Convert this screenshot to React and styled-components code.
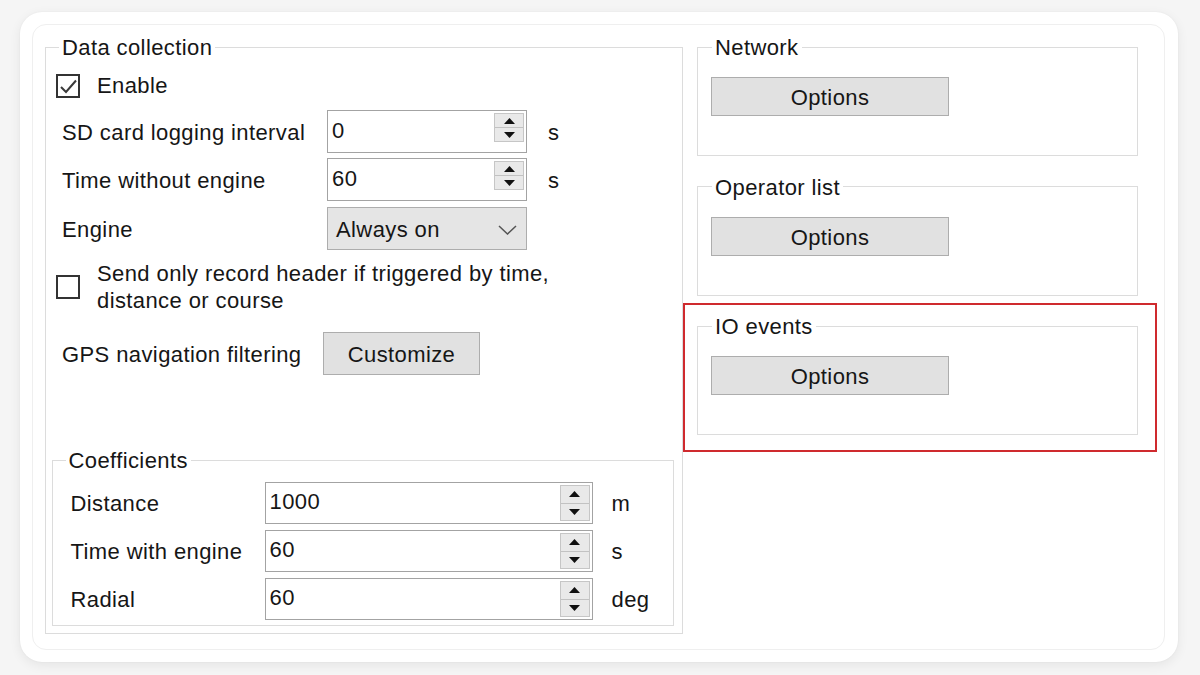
import React from 'react';
import styled, { createGlobalStyle } from 'styled-components';

const Global = createGlobalStyle`
  html, body { margin: 0; padding: 0; background: #f5f5f5; }
  body { font-family: "Liberation Sans", Arial, sans-serif; color: #161616; }
  * { box-sizing: border-box; }
`;

const Page = styled.div`
  width: 1200px;
  height: 675px;
  padding: 12px 22px 13px 20px;
`;

const Card = styled.div`
  height: 100%;
  background: #fff;
  border-radius: 22px;
  box-shadow: 0 3px 12px rgba(0, 0, 0, 0.07), 0 0 2px rgba(0, 0, 0, 0.05);
  padding: 12px 13px 12px 12px;
`;

const Frame = styled.div`
  height: 100%;
  border: 1.5px solid #efefef;
  border-radius: 14px;
  padding: 10px 0 0 11.5px;
  display: flex;
  align-items: flex-start;
  gap: 14px;
`;

const Group = styled.fieldset`
  margin: ${p => p.$margin || '0'};
  padding: 0 0 ${p => p.$padBottom || 0}px 0;
  border: 1.5px solid #dcdcdc;
  min-width: 0;
  width: ${p => p.$width || 'auto'};
  display: flex;
  flex-direction: column;
  align-items: flex-start;
`;

const Legend = styled.legend`
  margin-left: ${p => p.$offset || 13.5}px;
  padding: 1px 3px 0;
  font-size: 22px;
  letter-spacing: 0.4px;
  line-height: 23px;
  height: 24px;
  color: #161616;
`;

const Text = styled.span`
  font-size: 22px;
  letter-spacing: 0.4px;
  line-height: ${p => p.$lh || 24}px;
  color: #161616;
  white-space: nowrap;
`;

const CheckRow = styled.div`
  display: flex;
  align-items: center;
  gap: 17px;
  margin-top: ${p => p.$top}px;
  padding-left: 10.5px;
`;

const Box = styled.span`
  width: 24px;
  height: 24px;
  border: 2px solid #333;
  background: #fff;
  display: flex;
  align-items: center;
  justify-content: center;
  flex: none;
`;

const FieldRow = styled.div`
  display: grid;
  grid-template-columns: ${p => p.$cols};
  align-items: center;
  height: ${p => p.$h || 43}px;
  margin-top: ${p => p.$top}px;
  padding-left: ${p => p.$pad || 16.5}px;
`;

const Label = styled(Text)`
  padding-top: 2px;
`;

const Unit = styled(Text)`
  margin-left: ${p => p.$gap || 21}px;
  padding-top: 2px;
`;

const InputBox = styled.div`
  height: 100%;
  border: 1.5px solid #a3a3a3;
  background: #fff;
  display: flex;
  align-items: stretch;
  padding: 2px 2px 2px 4px;
`;

const Value = styled(Text)`
  flex: 1;
  align-self: center;
  margin-top: -2px;
`;

const Spinner = styled.div`
  width: 30px;
  display: flex;
  flex-direction: column;
  border: 1px solid #c6c6c6;
  background: #e9e9e9;
  margin-bottom: ${p => p.$bottom || 0}px;
`;

const SpinHalf = styled.div`
  flex: 1;
  display: flex;
  align-items: center;
  justify-content: center;
  border-top: ${p => (p.$lower ? '1.5px solid #c2c2c2' : 'none')};
`;

const Select = styled.div`
  height: 100%;
  border: 1.5px solid #adadad;
  background: #e5e5e5;
  display: flex;
  align-items: center;
  justify-content: space-between;
  padding: 2px 9px 0 8px;
`;

const Button = styled.div`
  width: ${p => p.$w}px;
  height: ${p => p.$h || 39}px;
  margin: ${p => p.$margin || '0'};
  border: 1.5px solid #adadad;
  background: #e1e1e1;
  display: flex;
  align-items: center;
  justify-content: center;
  padding-top: 3px;
`;

const RightCol = styled.div`
  width: 441px;
  display: flex;
  flex-direction: column;
  gap: 18.5px;
`;

const Highlight = styled.div`
  border: 2px solid #cf2a2e;
  padding: 9px 17px 15px 12px;
  margin: -11px -19px -17px -14px;
`;

const Arrow = ({ down }) => (
  <svg width="11" height="6" viewBox="0 0 11 6">
    <polygon points={down ? '0,0 11,0 5.5,6' : '0,6 11,6 5.5,0'} fill="#111" />
  </svg>
);

const Spin = ({ bottom }) => (
  <Spinner $bottom={bottom}>
    <SpinHalf><Arrow /></SpinHalf>
    <SpinHalf $lower><Arrow down /></SpinHalf>
  </Spinner>
);

const NumInput = ({ value, bottom }) => (
  <InputBox>
    <Value>{value}</Value>
    <Spin bottom={bottom} />
  </InputBox>
);

const Check = ({ checked }) => (
  <Box>
    {checked && (
      <svg width="19" height="17" viewBox="0 0 19 17">
        <polyline points="2,9 7,14 17,2.5" fill="none" stroke="#3a3a3a" strokeWidth="2" />
      </svg>
    )}
  </Box>
);

const Chevron = () => (
  <svg width="19" height="10" viewBox="0 0 19 10">
    <polyline points="1,1 9.5,9 18,1" fill="none" stroke="#555" strokeWidth="1.5" />
  </svg>
);

const OptionsGroup = ({ title }) => (
  <Group $padBottom={39}>
    <Legend $offset={14.5}>{title}</Legend>
    <Button $w={238} $margin="18px 0 0 13.5px"><Text>Options</Text></Button>
  </Group>
);

export default function App() {
  return (
    <>
      <Global />
      <Page>
        <Card>
          <Frame>
            <Group $width="638px" $padBottom={7}>
              <Legend>Data collection</Legend>
              <CheckRow $top={15}>
                <Check checked />
                <Text>Enable</Text>
              </CheckRow>
              <FieldRow $top={12} $cols="265px 200px auto">
                <Label>SD card logging interval</Label>
                <NumInput value="0" bottom={8} />
                <Unit>s</Unit>
              </FieldRow>
              <FieldRow $top={5} $cols="265px 200px auto">
                <Label>Time without engine</Label>
                <NumInput value="60" bottom={8} />
                <Unit>s</Unit>
              </FieldRow>
              <FieldRow $top={6} $cols="265px 200px auto">
                <Label>Engine</Label>
                <Select>
                  <Text>Always on</Text>
                  <Chevron />
                </Select>
              </FieldRow>
              <CheckRow $top={9.5}>
                <Check />
                <Text $lh={27}>
                  Send only record header if triggered by time,
                  <br />
                  distance or course
                </Text>
              </CheckRow>
              <FieldRow $top={18.5} $cols="261px 157px">
                <Label>GPS navigation filtering</Label>
                <Button $w={157} $h={43}><Text>Customize</Text></Button>
              </FieldRow>
              <Group $width="622px" $margin="73px 0 0 6.5px" $padBottom={5}>
                <Legend $offset={12.5}>Coefficients</Legend>
                <FieldRow $top={10} $h={42} $pad={17.5} $cols="194px 328px auto">
                  <Label>Distance</Label>
                  <NumInput value="1000" />
                  <Unit $gap={19}>m</Unit>
                </FieldRow>
                <FieldRow $top={6} $h={42} $pad={17.5} $cols="194px 328px auto">
                  <Label>Time with engine</Label>
                  <NumInput value="60" />
                  <Unit $gap={19}>s</Unit>
                </FieldRow>
                <FieldRow $top={6} $h={42} $pad={17.5} $cols="194px 328px auto">
                  <Label>Radial</Label>
                  <NumInput value="60" />
                  <Unit $gap={19}>deg</Unit>
                </FieldRow>
              </Group>
            </Group>
            <RightCol>
              <OptionsGroup title="Network" />
              <OptionsGroup title="Operator list" />
              <Highlight>
                <OptionsGroup title="IO events" />
              </Highlight>
            </RightCol>
          </Frame>
        </Card>
      </Page>
    </>
  );
}
